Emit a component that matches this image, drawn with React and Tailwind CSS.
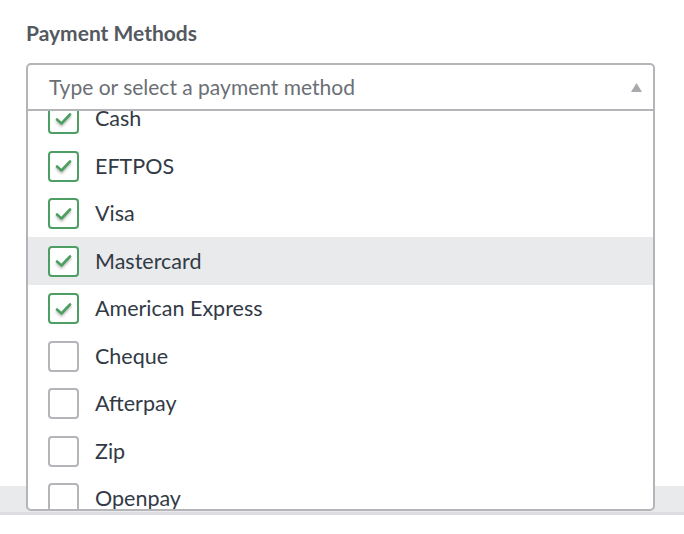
import React from "react";

const methods = [
  { name: "Cash", checked: true },
  { name: "EFTPOS", checked: true },
  { name: "Visa", checked: true },
  { name: "Mastercard", checked: true, active: true },
  { name: "American Express", checked: true },
  { name: "Cheque", checked: false },
  { name: "Afterpay", checked: false },
  { name: "Zip", checked: false },
  { name: "Openpay", checked: false },
];

function Checkbox({ checked }) {
  if (!checked) {
    return <span className="h-[31px] w-[31px] shrink-0 rounded-[4px] border-2 border-[#b4b4b9] bg-white" />;
  }
  return (
    <span className="flex h-[31px] w-[31px] shrink-0 items-center justify-center rounded-[4px] border-2 border-[#4c9e63] bg-white">
      <svg width="17" height="14" viewBox="0 0 17 14" className="drop-shadow-[0_2px_1px_rgba(0,0,0,0.25)]">
        <path d="M2 7.5 L6.5 11.5 L15 2.5" fill="none" stroke="#4c9e63" strokeWidth="2.6" strokeLinecap="round" strokeLinejoin="round" />
      </svg>
    </span>
  );
}

export default function App() {
  return (
    <div className="relative h-[534px] w-[684px] overflow-hidden bg-white font-['Lato','Liberation_Sans',sans-serif]">
      <div className="px-[26px] pt-[21px]">
        <div className="text-[21px] font-bold leading-[24px] text-[#545960]">Payment Methods</div>
        <div className="mt-[18px] flex h-[48px] w-[629px] items-center justify-between rounded-t-[5px] border-2 border-[#b4b4b9] pl-[21px] pr-[11px]">
          <span className="text-[21px] text-[#6b6f76]">Type or select a payment method</span>
          <svg width="11" height="9" viewBox="0 0 11 9">
            <path d="M5.5 0 L11 9 L0 9 Z" fill="#a9a9ae" />
          </svg>
        </div>
      </div>

      <div className="mt-[375px] h-[29px] border-b-[3px] border-[#dcdde0] bg-[#e9eaec]" />

      <div className="absolute left-[26px] top-[109px] h-[402px] w-[629px] overflow-hidden rounded-b-[5px] border-2 border-[#b4b4b9] bg-white">
        <div className="-mt-[16.25px]">
          {methods.map((m) => (
            <div
              key={m.name}
              className={`flex h-[47.5px] items-center gap-[16px] pl-[20px] ${m.active ? "bg-[#e9eaec]" : ""}`}
            >
              <Checkbox checked={m.checked} />
              <span className="text-[21.5px] text-[#323a46]">{m.name}</span>
            </div>
          ))}
        </div>
      </div>
    </div>
  );
}
